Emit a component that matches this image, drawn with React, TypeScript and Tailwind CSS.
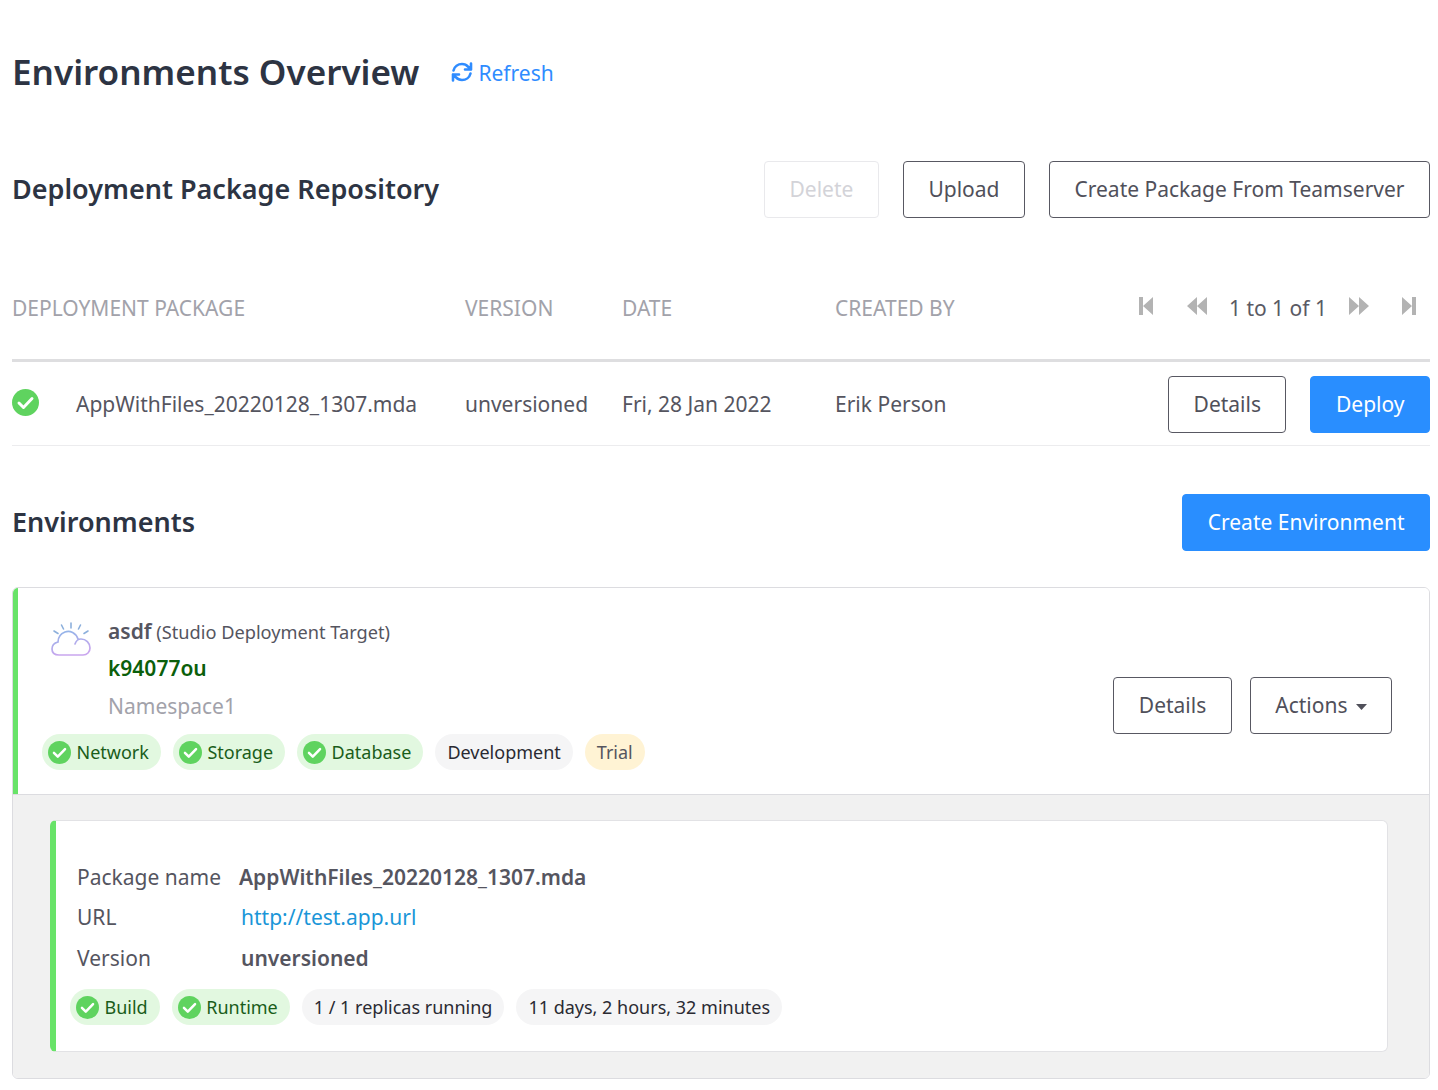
import React from "react";

const font = { fontFamily: "'Noto Sans', sans-serif" };

function CheckCircle({ size = 24 }: { size?: number }) {
  return (
    <svg width={size} height={size} viewBox="0 0 24 24" className="shrink-0">
      <circle cx="12" cy="12" r="12" fill="#5fd35f" />
      <path d="M6.2 12.4l4 4 7.6-8" fill="none" stroke="#fff" strokeWidth="2.6" strokeLinecap="round" strokeLinejoin="round" />
    </svg>
  );
}

function Button({ children, primary, disabled, className = "" }: { children: React.ReactNode; primary?: boolean; disabled?: boolean; className?: string }) {
  const look = primary
    ? "bg-[#298eff] border-[#298eff] text-white"
    : disabled
      ? "bg-white border-[#e9e9ec] text-[#d3d3d8]"
      : "bg-white border-[#585862] text-[#50505a]";
  return <div className={`h-[57px] px-[24.5px] flex items-center justify-center border rounded-[4px] text-[21px] whitespace-nowrap ${look} ${className}`}>{children}</div>;
}

function StatusPill({ label }: { label: string }) {
  return (
    <div className="h-9 rounded-full bg-[#e2f8e0] flex items-center text-[#1a5d1a] text-[18px] gap-[5.5px] pl-[6px] pr-3">
      <CheckCircle size={23} />
      <span>{label}</span>
    </div>
  );
}

function Pill({ label, className = "bg-[#f5f5f6] text-[#2a2a32]" }: { label: string; className?: string }) {
  return <div className={`h-9 rounded-full px-3 flex items-center text-[18px] ${className}`}>{label}</div>;
}

function Skip({ flip, double }: { flip?: boolean; double?: boolean }) {
  return (
    <svg width="20" height="20" viewBox="0 0 20 20" fill="#b3b3b3" className={`-mt-[6px] ${flip ? "-scale-x-100" : ""}`}>
      {double ? <path d="M10 1v18L0 10zM20 1v18L10 10z" /> : <path d="M1 1h4v18H1zM5 10l10-9v18z" />}
    </svg>
  );
}

function CloudLogo() {
  return (
    <svg width="44" height="40" viewBox="0 0 44 40" fill="none" strokeLinecap="round">
      <defs>
        <linearGradient id="cloud" x1="0" y1="0" x2="0.3" y2="1">
          <stop offset="0" stopColor="#8fb6e8" />
          <stop offset="1" stopColor="#c9a6ee" />
        </linearGradient>
      </defs>
      <path d="M22 4v5M12.500 6l2 4M31.500 6l-2 4M5 12l4 2.500M39 12l-4 2.500" stroke="#8db0dc" strokeWidth="1.600" />
      <path d="M29 20c-2-6-8-9-13-7-5 2-7 6-7 10-4 1-6 4-6 7 0 4 3 6 7 6h24c4 0 7-3 7-7 0-5-4-9-9-9-3 0-5 2-6 5" stroke="url(#cloud)" strokeWidth="1.700" />
    </svg>
  );
}

export default function App() {
  return (
    <div className="w-[1438px] h-[1090px] overflow-hidden bg-white pl-3 pr-2 text-[21px]" style={font}>
      {/* Page title */}
      <div className="flex items-center h-[54px] mt-[45px]">
        <h1 className="text-[35.1px] font-semibold text-[#2d3443] leading-none">Environments Overview</h1>
        <div className="ml-[32px] flex items-center gap-[5px] text-[#2f8cff]">
          <svg width="22" height="22" viewBox="0 0 22 22" fill="none" stroke="#2f8cff" strokeWidth="2.600" strokeLinecap="round" strokeLinejoin="round">
            <path d="M2.500 9.500C3.500 5.500 7 3 11 3c2.500 0 4.700 1.100 6.200 2.800L20 8.500M20 2.500v6h-6" />
            <path d="M19.500 12.500C18.500 16.500 15 19 11 19c-2.500 0-4.700-1.100-6.200-2.800L2 13.500M2 19.500v-6h6" />
          </svg>
          <span className="pt-[4px]">Refresh</span>
        </div>
      </div>

      {/* Repository */}
      <div className="flex items-center justify-between mt-[62px]">
        <h2 className="text-[27px] font-semibold text-[#2d3443]">Deployment Package Repository</h2>
        <div className="flex gap-6">
          <Button disabled>Delete</Button>
          <Button>Upload</Button>
          <Button>Create Package From Teamserver</Button>
        </div>
      </div>

      {/* Table */}
      <div className="mt-[52px] h-[92px] pb-[11px] flex items-center border-b-[3px] border-[#dedee0] text-[#a2a2aa]">
        <div className="w-[453px]">DEPLOYMENT PACKAGE</div>
        <div className="w-[157px]">VERSION</div>
        <div className="w-[213px]">DATE</div>
        <div className="w-[260px]">CREATED BY</div>
        <div className="flex-1 flex items-center justify-end pr-[13px] text-[#5a5a64]">
          <Skip />
          <div className="ml-[29px]"><Skip double /></div>
          <span className="mx-[22px]">1 to 1 of 1</span>
          <Skip double flip />
          <div className="ml-7"><Skip flip /></div>
        </div>
      </div>
      <div className="flex items-center h-[84px] border-b border-[#ececee] text-[#55555f] pt-[2px]">
        <div className="w-[64px] -mt-[4px]"><CheckCircle size={27} /></div>
        <div className="w-[389px]">AppWithFiles_20220128_1307.mda</div>
        <div className="w-[157px]">unversioned</div>
        <div className="w-[213px]">Fri, 28 Jan 2022</div>
        <div className="flex-1">Erik Person</div>
        <div className="flex gap-6">
          <Button>Details</Button>
          <Button primary>Deploy</Button>
        </div>
      </div>

      {/* Environments */}
      <div className="flex items-center justify-between mt-[48px]">
        <h2 className="text-[27px] font-semibold text-[#2d3443]">Environments</h2>
        <Button primary>Create Environment</Button>
      </div>

      <div className="mt-[36px] h-[492px] rounded-[6px] border border-[#dcdce0] overflow-hidden flex flex-col">
        <div className="h-[206px] shrink-0 -ml-px bg-white border-l-[6px] border-[#68e368] pl-6 pr-[37px] flex items-start justify-between">
          <div>
            <div className="flex">
              <div className="pl-[7px] pt-[31px] w-[66px]"><CloudLogo /></div>
              <div className="pt-[26px]">
                <div className="leading-[34px] text-[#55555f] text-[18.2px]">
                  <span className="text-[21px] font-semibold">asdf</span> (Studio Deployment Target)
                </div>
                <div className="leading-[38px] font-semibold text-[#0b5f0b]">k94077ou</div>
                <div className="leading-[38px] text-[#a2a2aa]">Namespace1</div>
              </div>
            </div>
            <div className="flex gap-3 mt-[9px]">
              <StatusPill label="Network" />
              <StatusPill label="Storage" />
              <StatusPill label="Database" />
              <Pill label="Development" />
              <Pill label="Trial" className="bg-[#fff3d4] text-[#55555f]" />
            </div>
          </div>
          <div className="flex gap-[18px] mt-[89px]">
            <Button>Details</Button>
            <Button>
              Actions
              <svg width="11" height="6" viewBox="0 0 11 6" className="ml-[8px] mt-[3px]"><path d="M0 0h11L5.500 6z" fill="#50505a" /></svg>
            </Button>
          </div>
        </div>

        <div className="flex-1 bg-[#f1f1f1] border-t border-[#dcdce0] pl-[37px] pr-[41px] pt-[25px]">
          <div className="h-[232px] rounded-[6px] bg-white border border-[#e2e2e5] border-l-[6px] border-l-[#68e368] pl-[21px] pt-[36px] text-[#55555f]">
            <div className="flex h-[41px] items-center">
              <span className="w-[162px]">Package name</span>
              <span className="font-semibold">AppWithFiles_20220128_1307.mda</span>
            </div>
            <div className="flex h-[40px] items-center">
              <span className="w-[164px]">URL</span>
              <span className="text-[#1a96d8]">http://test.app.url</span>
            </div>
            <div className="flex h-[41px] items-center">
              <span className="w-[164px]">Version</span>
              <span className="font-semibold">unversioned</span>
            </div>
            <div className="flex gap-3 -ml-[7px] mt-[10px]">
              <StatusPill label="Build" />
              <StatusPill label="Runtime" />
              <Pill label="1 / 1 replicas running" />
              <Pill label="11 days, 2 hours, 32 minutes" />
            </div>
          </div>
        </div>
      </div>
    </div>
  );
}
